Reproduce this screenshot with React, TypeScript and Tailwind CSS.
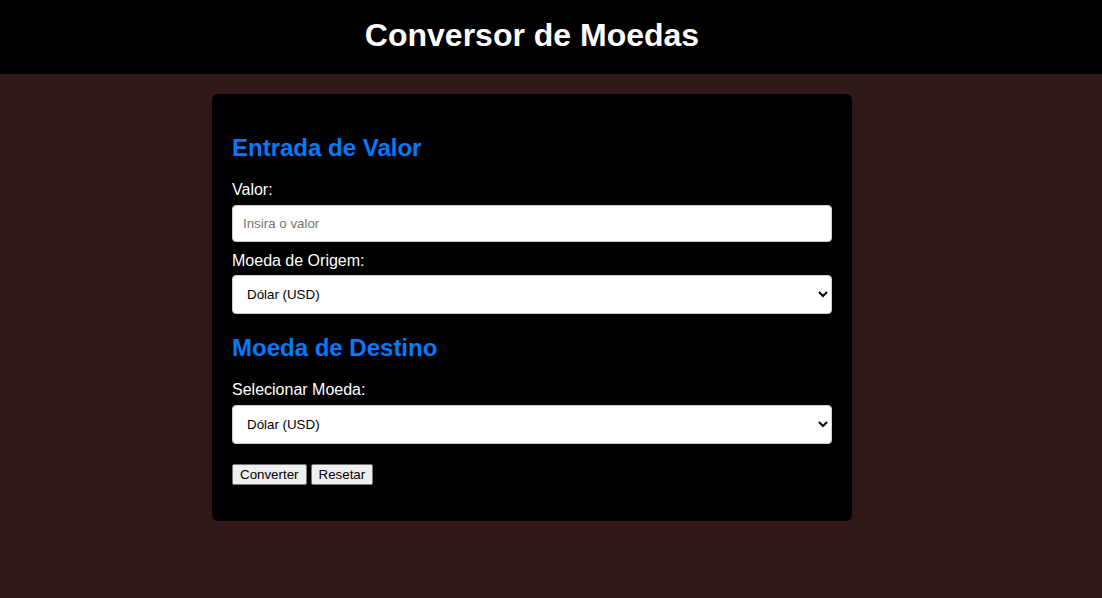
import React from "react";

export default function App() {
  const font = { fontFamily: '"Liberation Sans", Arial, sans-serif' };
  return (
    <div className="min-h-[598px] bg-[#311818] flex flex-col" style={font}>
      <header className="h-[74px] bg-black flex items-center">
        <div className="w-[1064px] flex justify-center">
          <h1 className="text-[32px] font-bold text-white leading-[37px] -mt-[4px]">Conversor de Moedas</h1>
        </div>
      </header>
      <div className="w-[1064px] flex justify-center pt-[20px]">
        <div className="w-[640px] bg-black rounded-[6px] px-[20px] pt-[20px] pb-[36px] flex flex-col">
          <h2 className="text-[24px] font-bold text-[#007bff] leading-[28px] mt-[20px] mb-[19px]">Entrada de Valor</h2>
          <label className="text-white text-[16px] leading-[18px]">Valor:</label>
          <input
            type="text"
            placeholder="Insira o valor"
            className="mt-[6px] h-[37px] w-full bg-white rounded-[4px] border border-[#ccc] px-[10px] text-[13.33px] text-black placeholder:text-[#757575] outline-none"
          />
          <label className="text-white text-[16px] leading-[18px] mt-[10px]">Moeda de Origem:</label>
          <select className="mt-[5px] h-[39px] w-full bg-white rounded-[4px] border border-[#ccc] px-[10px] text-[13.33px] text-black">
            <option>Dólar (USD)</option>
          </select>
          <h2 className="text-[24px] font-bold text-[#007bff] leading-[28px] mt-[20px] mb-[19px]">Moeda de Destino</h2>
          <label className="text-white text-[16px] leading-[18px]">Selecionar Moeda:</label>
          <select className="mt-[6px] h-[39px] w-full bg-white rounded-[4px] border border-[#ccc] px-[10px] text-[13.33px] text-black">
            <option>Dólar (USD)</option>
          </select>
          <div className="flex gap-[4px] mt-[20px]">
            <button className="h-[21px] px-[7px] bg-[#efefef] border border-[#767676] rounded-[2px] text-[13.33px] text-black leading-[15px]">Converter</button>
            <button className="h-[21px] px-[7px] bg-[#efefef] border border-[#767676] rounded-[2px] text-[13.33px] text-black leading-[15px]">Resetar</button>
          </div>
        </div>
      </div>
    </div>
  );
}
